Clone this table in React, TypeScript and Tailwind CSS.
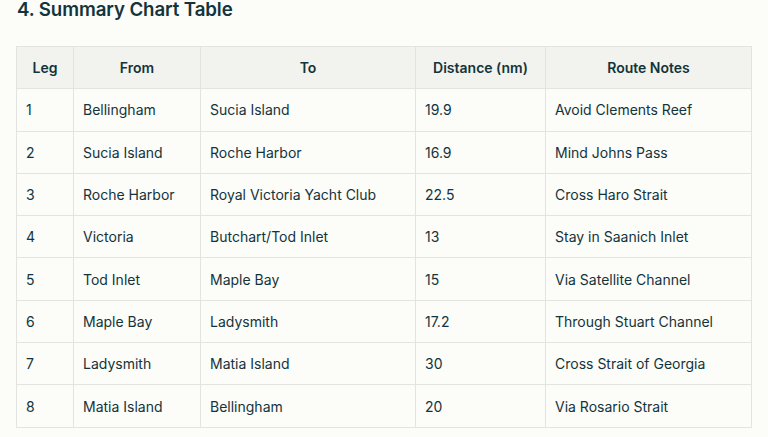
const rows = [
  ["1", "Bellingham", "Sucia Island", "19.9", "Avoid Clements Reef"],
  ["2", "Sucia Island", "Roche Harbor", "16.9", "Mind Johns Pass"],
  ["3", "Roche Harbor", "Royal Victoria Yacht Club", "22.5", "Cross Haro Strait"],
  ["4", "Victoria", "Butchart/Tod Inlet", "13", "Stay in Saanich Inlet"],
  ["5", "Tod Inlet", "Maple Bay", "15", "Via Satellite Channel"],
  ["6", "Maple Bay", "Ladysmith", "17.2", "Through Stuart Channel"],
  ["7", "Ladysmith", "Matia Island", "30", "Cross Strait of Georgia"],
  ["8", "Matia Island", "Bellingham", "20", "Via Rosario Strait"],
];

const headers = ["Leg", "From", "To", "Distance (nm)", "Route Notes"];
const widths = ["w-[57px]", "w-[127px]", "w-[215px]", "w-[130px]", "w-[206px]"];

export default function App() {
  return (
    <div className="h-[437px] w-[768px] overflow-hidden bg-[#fcfcf9] pl-4 text-[#13343b] font-['Inter',sans-serif]">
      <h2 className="pl-[1px] text-[18.7px] font-semibold leading-[19px] tracking-[-0.1px]">
        4. Summary Chart Table
      </h2>
      <table className="mt-[27px] w-[734px] table-fixed border-collapse text-[14px]">
        <colgroup>
          {widths.map((w) => (
            <col key={w} className={w} />
          ))}
        </colgroup>
        <thead>
          <tr className="h-[42.3px] bg-[#f2f2ee]">
            {headers.map((h) => (
              <th key={h} className="border border-[#e3e3df] px-[9px] text-center font-semibold">
                {h}
              </th>
            ))}
          </tr>
        </thead>
        <tbody>
          {rows.map((r) => (
            <tr key={r[0]} className="h-[42.3px]">
              {r.map((c, i) => (
                <td key={i} className="border border-[#e3e3df] px-[9px] text-left font-normal">
                  {c}
                </td>
              ))}
            </tr>
          ))}
        </tbody>
      </table>
    </div>
  );
}
